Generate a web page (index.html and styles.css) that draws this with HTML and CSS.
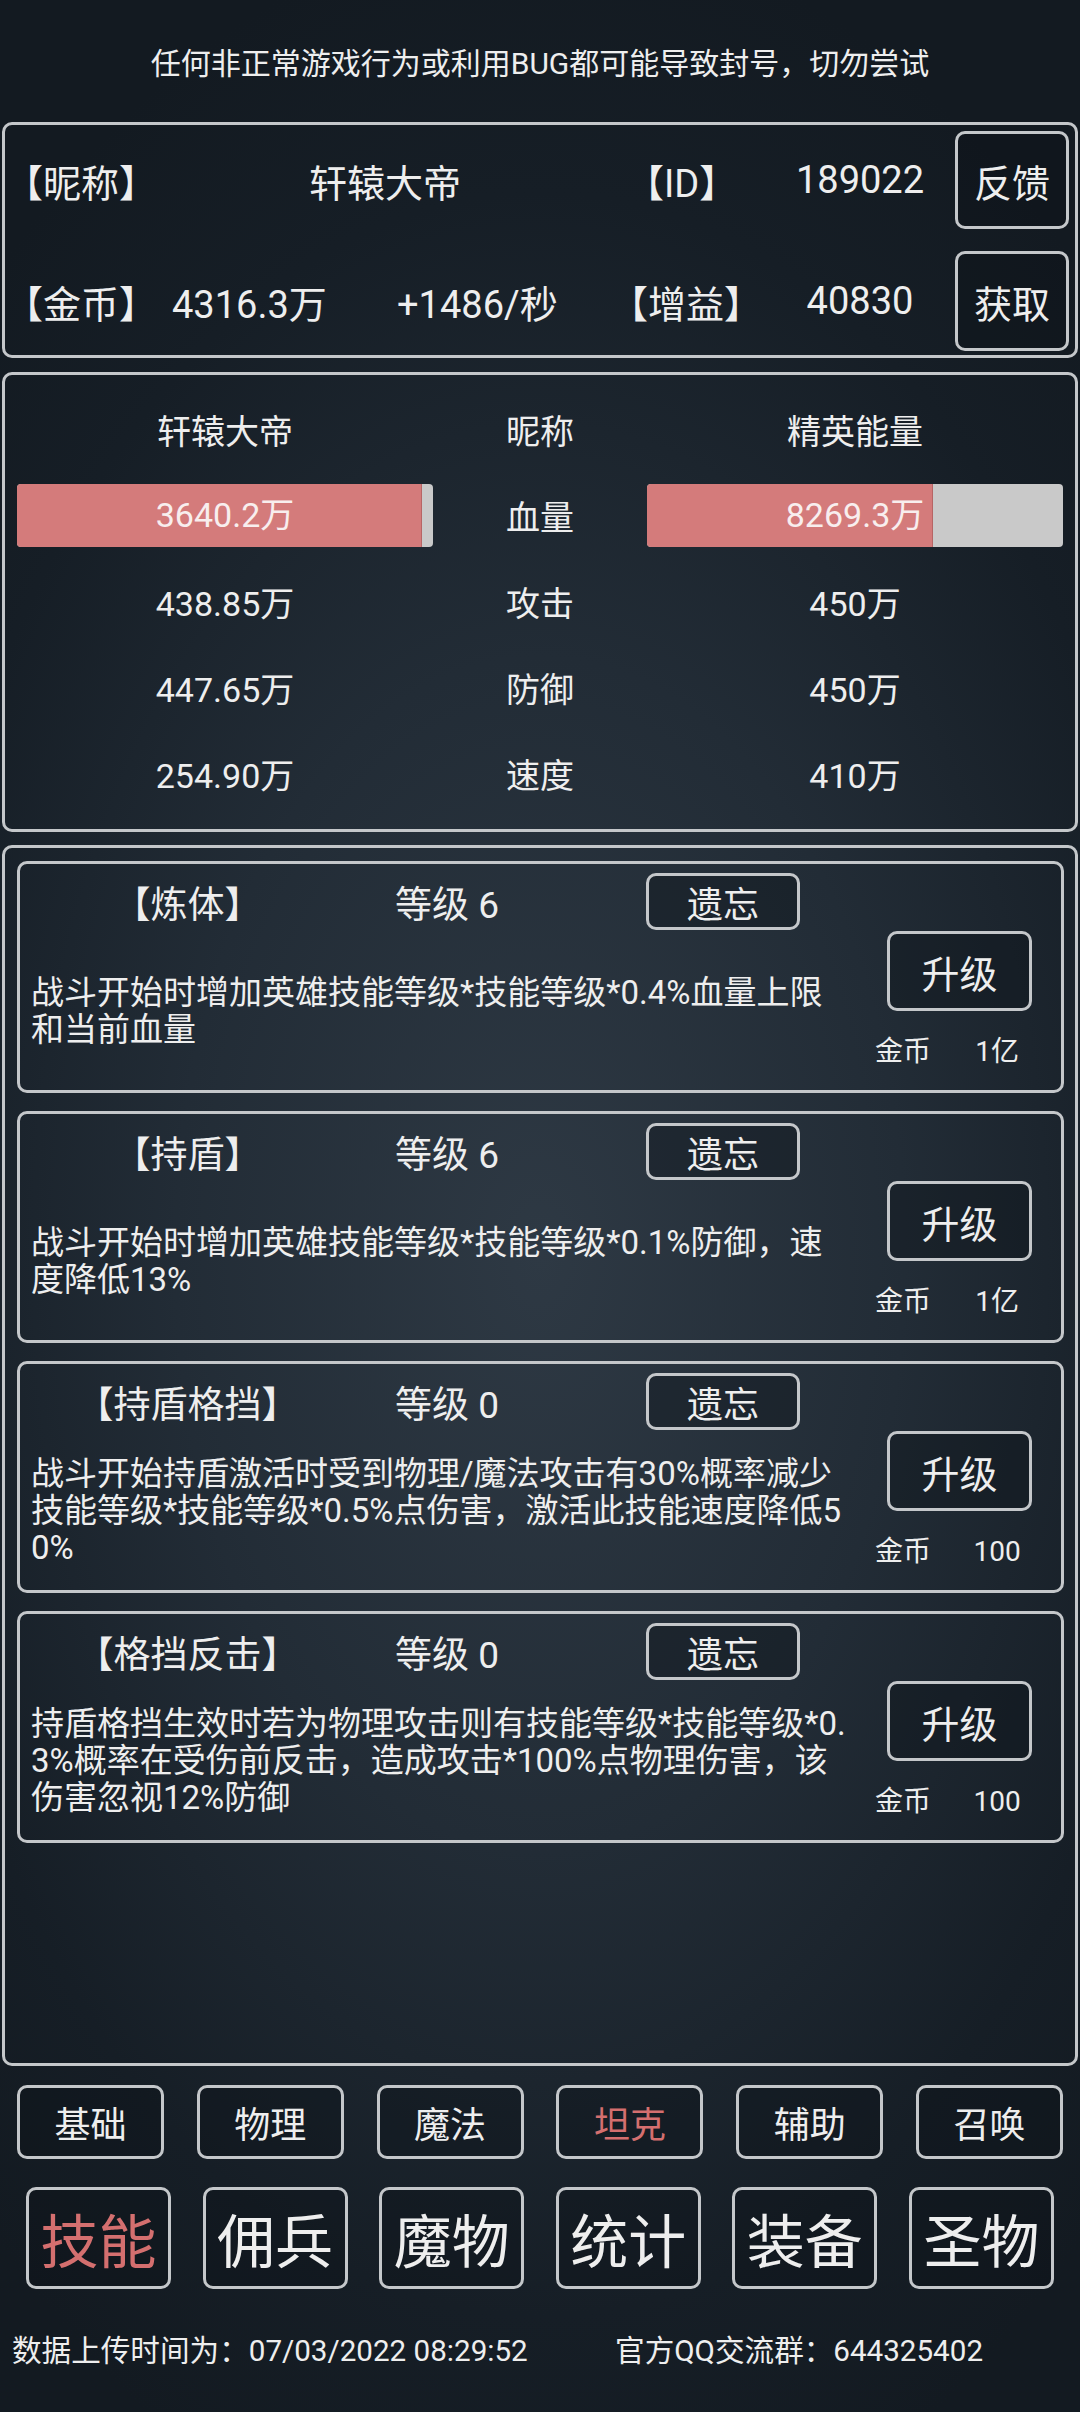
FILE: index.html
```html
<!DOCTYPE html>
<html lang="zh-CN">
<head>
    <meta charset="UTF-8">
    <meta name="viewport" content="width=device-width, initial-scale=1.0">
    <title>技能 - 坦克</title>
    <link rel="stylesheet" href="styles.css">
</head>
<body>
    <div class="notice">任何非正常游戏行为或利用BUG都可能导致封号，切勿尝试</div>

    <section class="panel info">
        <div class="info-row row-top">
            <span class="c-label">【昵称】</span>
            <span class="c-name">轩辕大帝</span>
            <span class="c-key">【ID】</span>
            <span class="c-val">189022</span>
            <button class="btn info-btn">反馈</button>
        </div>
        <div class="info-row row-bottom">
            <span class="c-label2">【金币】</span>
            <span class="c-gold">4316.3万</span>
            <span class="c-rate">+1486/秒</span>
            <span class="c-key2">【增益】</span>
            <span class="c-val">40830</span>
            <button class="btn info-btn">获取</button>
        </div>
    </section>

    <section class="panel stats">
        <div>轩辕大帝</div>
        <div>昵称</div>
        <div>精英能量</div>

        <div class="bar"><div class="bar-fill" style="width: 97.4%"></div><span>3640.2万</span></div>
        <div>血量</div>
        <div class="bar"><div class="bar-fill" style="width: 68.8%"></div><span>8269.3万</span></div>

        <div>438.85万</div>
        <div>攻击</div>
        <div>450万</div>

        <div>447.65万</div>
        <div>防御</div>
        <div>450万</div>

        <div>254.90万</div>
        <div>速度</div>
        <div>410万</div>
    </section>

    <section class="panel skills">
        <div class="skill">
            <div class="skill-head">
                <span class="skill-name">【炼体】</span>
                <span class="skill-level">等级 6</span>
                <button class="btn forget-btn">遗忘</button>
            </div>
            <div class="skill-body">
                <p class="skill-desc">战斗开始时增加英雄技能等级*技能等级*0.4%血量上限和当前血量</p>
                <div class="skill-side">
                    <button class="btn up-btn">升级</button>
                    <div class="cost"><span>金币</span><span class="cost-val">1亿</span></div>
                </div>
            </div>
        </div>

        <div class="skill">
            <div class="skill-head">
                <span class="skill-name">【持盾】</span>
                <span class="skill-level">等级 6</span>
                <button class="btn forget-btn">遗忘</button>
            </div>
            <div class="skill-body">
                <p class="skill-desc">战斗开始时增加英雄技能等级*技能等级*0.1%防御，速度降低13%</p>
                <div class="skill-side">
                    <button class="btn up-btn">升级</button>
                    <div class="cost"><span>金币</span><span class="cost-val">1亿</span></div>
                </div>
            </div>
        </div>

        <div class="skill">
            <div class="skill-head">
                <span class="skill-name">【持盾格挡】</span>
                <span class="skill-level">等级 0</span>
                <button class="btn forget-btn">遗忘</button>
            </div>
            <div class="skill-body">
                <p class="skill-desc">战斗开始持盾激活时受到物理/魔法攻击有30%概率减少技能等级*技能等级*0.5%点伤害，激活此技能速度降低50%</p>
                <div class="skill-side">
                    <button class="btn up-btn">升级</button>
                    <div class="cost"><span>金币</span><span class="cost-val">100</span></div>
                </div>
            </div>
        </div>

        <div class="skill">
            <div class="skill-head">
                <span class="skill-name">【格挡反击】</span>
                <span class="skill-level">等级 0</span>
                <button class="btn forget-btn">遗忘</button>
            </div>
            <div class="skill-body">
                <p class="skill-desc">持盾格挡生效时若为物理攻击则有技能等级*技能等级*0.3%概率在受伤前反击，造成攻击*100%点物理伤害，该伤害忽视12%防御</p>
                <div class="skill-side">
                    <button class="btn up-btn">升级</button>
                    <div class="cost"><span>金币</span><span class="cost-val">100</span></div>
                </div>
            </div>
        </div>
    </section>

    <nav class="tabs">
        <button class="btn tab">基础</button>
        <button class="btn tab">物理</button>
        <button class="btn tab">魔法</button>
        <button class="btn tab active">坦克</button>
        <button class="btn tab">辅助</button>
        <button class="btn tab">召唤</button>
    </nav>

    <nav class="menu">
        <button class="btn menu-item active">技能</button>
        <button class="btn menu-item">佣兵</button>
        <button class="btn menu-item">魔物</button>
        <button class="btn menu-item">统计</button>
        <button class="btn menu-item">装备</button>
        <button class="btn menu-item">圣物</button>
    </nav>

    <footer class="footer">
        <span>数据上传时间为：07/03/2022 08:29:52</span>
        <span class="qq">官方QQ交流群：644325402</span>
    </footer>
</body>
</html>
```

FILE: styles.css
```css
body {
    margin: 0;
    width: 1080px;
    height: 2412px;
    overflow: hidden;
    font-family: Roboto, "Noto Sans CJK SC", sans-serif;
    color: #eeeeee;
    background: radial-gradient(ellipse 75% 55% at 50% 52%, #2e3944 0%, #222c36 45%, #161e26 80%, #131a21 100%);
}
.notice {
    height: 122px;
    display: flex;
    align-items: center;
    justify-content: center;
    font-size: 30px;
}
.panel {
    margin: 0 2px;
    border: 3px solid #c4c7ca;
    border-radius: 10px;
    box-sizing: border-box;
}
.btn {
    font-family: inherit;
    color: #eeeeee;
    background: rgba(12, 17, 23, 0.35);
    border: 3px solid #c4c7ca;
    border-radius: 10px;
    padding: 0;
    cursor: pointer;
}

/* player info */
.info {
    height: 236px;
    padding: 6px 0 4px;
    display: flex;
    flex-direction: column;
    gap: 22px;
}
.info-row {
    display: flex;
    align-items: center;
    font-size: 38px;
}
.row-top {
    height: 98px;
}
.row-bottom {
    height: 100px;
}
.c-label {
    width: 145px;
}
.c-name {
    width: 470px;
    text-align: center;
}
.c-key {
    width: 154px;
    padding-left: 6px;
}
.c-val {
    width: 160px;
    text-align: center;
}
.c-label2 {
    width: 160px;
}
.c-gold {
    width: 218px;
    padding-left: 7px;
}
.c-rate {
    width: 213px;
    padding-left: 7px;
}
.c-key2 {
    width: 170px;
}
.info-btn {
    width: 114px;
    height: 100%;
    margin-left: 15px;
    font-size: 38px;
}

/* battle stats */
.stats {
    margin-top: 14px;
    height: 460px;
    padding: 11px 12px 0;
    display: grid;
    grid-template-columns: 416px 1fr 416px;
    grid-auto-rows: 86px;
    align-items: center;
    text-align: center;
    font-size: 34px;
}
.bar {
    position: relative;
    height: 63px;
    background: #c9c9c9;
    border-radius: 4px;
    overflow: hidden;
}
.bar-fill {
    height: 100%;
    background: #d47b7b;
    border-right: 1px solid #b76565;
    box-sizing: border-box;
}
.bar span {
    position: absolute;
    left: 0;
    right: 0;
    top: 0;
    line-height: 63px;
    color: #f8eeee;
}

/* skills */
.skills {
    margin-top: 13px;
    height: 1221px;
    padding: 13px 11px 0 12px;
    display: flex;
    flex-direction: column;
    gap: 18px;
}
.skill {
    height: 232px;
    border: 3px solid #c4c7ca;
    border-radius: 10px;
    box-sizing: border-box;
}
.skill-head {
    height: 67px;
    padding-top: 8px;
    box-sizing: border-box;
    display: flex;
    align-items: center;
    font-size: 37px;
}
.skill-name {
    width: 335px;
    text-align: center;
}
.skill-level {
    width: 251px;
    padding-left: 40px;
}
.forget-btn {
    width: 154px;
    height: 57px;
    font-size: 36px;
}
.skill-body {
    height: 159px;
    display: flex;
}
.skill-desc {
    margin: 0 0 0 11px;
    width: 819px;
    align-self: center;
    font-size: 33px;
    line-height: 37px;
    word-break: break-all;
}
.skill-side {
    margin-left: 37px;
}
.up-btn {
    width: 145px;
    height: 80px;
    font-size: 38px;
}
.cost {
    display: flex;
    margin: 24px 0 0 -12px;
    font-size: 28px;
    line-height: 34px;
}
.cost-val {
    width: 90px;
    margin-left: 21px;
    text-align: center;
}

/* bottom navigation */
.tabs {
    margin-top: 19px;
    padding: 0 17px;
    display: flex;
    justify-content: space-between;
}
.tab {
    width: 147px;
    height: 74px;
    font-size: 36px;
}
.menu {
    margin-top: 28px;
    padding: 0 26px;
    display: flex;
    justify-content: space-between;
}
.menu-item {
    width: 145px;
    height: 102px;
    font-size: 58px;
}
.active {
    color: #d46f6f;
}
.footer {
    margin-top: 42px;
    padding-left: 12px;
    font-size: 29.6px;
    line-height: 40px;
}
.qq {
    margin-left: 80px;
}
```
